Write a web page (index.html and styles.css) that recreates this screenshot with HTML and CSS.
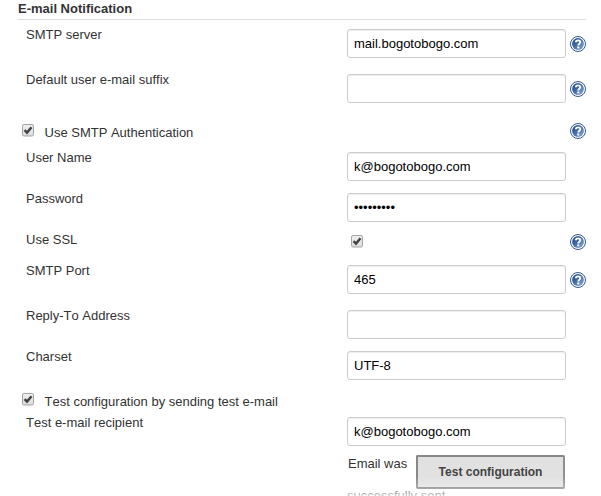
FILE: index.html
```html
<!DOCTYPE html>
<html lang="en">
<head>
<meta charset="utf-8">
<title>E-mail Notification</title>
<link rel="stylesheet" href="styles.css">
</head>
<body>
<svg class="defs" width="0" height="0">
  <defs>
    <linearGradient id="blue" x1="0" y1="0" x2="1" y2="1"><stop offset="0" stop-color="#1f4787"/><stop offset=".4" stop-color="#3a64a3"/><stop offset="1" stop-color="#8fb0d8"/></linearGradient>
    <linearGradient id="box" x1="0" y1="0" x2="0" y2="1"><stop offset="0" stop-color="#f0f0f0"/><stop offset="1" stop-color="#dcdcdc"/></linearGradient>
    <symbol id="help" viewBox="0 0 16 16">
      <circle cx="8" cy="8" r="7.5" fill="#fff" stroke="#34588f" stroke-width="1"/>
      <circle cx="8" cy="8" r="5.9" fill="url(#blue)"/>
      <path d="M5.9 6.2C5.9 3.7 10.3 3.8 10.3 6.1C10.3 7.7 8.3 7.7 8.3 9.5" fill="none" stroke="#fff" stroke-width="1.9"/>
      <rect x="7.2" y="10.5" width="2.1" height="1.9" fill="#fff"/>
    </symbol>
    <symbol id="check" viewBox="0 0 12 13">
      <rect x=".5" y=".5" width="11" height="11.5" rx="1.5" fill="url(#box)" stroke="#a5a5a5"/>
      <path d="M2.6 6.2L5 8.6L9.5 3.2" fill="none" stroke="#414141" stroke-width="2.4"/>
    </symbol>
  </defs>
</svg>
<form class="settings">
  <h1 class="heading">E-mail Notification</h1>
  <div class="row h45"><label>SMTP server</label><input type="text" value="mail.bogotobogo.com"><svg class="help"><use href="#help"/></svg></div>
  <div class="row h45"><label>Default user e-mail suffix</label><input type="text"><svg class="help"><use href="#help"/></svg></div>
  <div class="row h33 toggle"><label><svg class="check"><use href="#check"/></svg><span>Use SMTP Authentication</span></label><svg class="help"><use href="#help"/></svg></div>
  <div class="row h41"><label>User Name</label><input type="text" value="k@bogotobogo.com"></div>
  <div class="row h41"><label>Password</label><input type="password" value="secretkey"></div>
  <div class="row h31 ssl"><label>Use SSL</label><svg class="check"><use href="#check"/></svg><svg class="help"><use href="#help"/></svg></div>
  <div class="row h45"><label>SMTP Port</label><input type="text" value="465"><svg class="help"><use href="#help"/></svg></div>
  <div class="row h41"><label>Reply-To Address</label><input type="text"></div>
  <div class="row h41"><label>Charset</label><input type="text" value="UTF-8"></div>
  <div class="row h25 toggle"><label><svg class="check"><use href="#check"/></svg><span>Test configuration by sending test e-mail</span></label></div>
  <div class="row h38"><label>Test e-mail recipient</label><input type="text" value="k@bogotobogo.com"></div>
  <div class="result"><p>Email was successfully&nbsp;sent</p><button type="button">Test configuration</button></div>
</form>
</body>
</html>
```
FILE: styles.css
```css
* { box-sizing: border-box; }
body {
  margin: 0;
  height: 496px;
  overflow: hidden;
  background: #fff;
  color: #333;
  font: 13px/15px "Liberation Sans", Arial, sans-serif;
  font-kerning: none;
}
.defs { position: absolute; }
.settings { width: 568px; margin-left: 18px; }
.heading {
  height: 20px;
  margin: 0 0 7px;
  padding-top: 1px;
  border-bottom: 1px solid #ddd;
  font-size: 13px;
  line-height: 15px;
}
.row {
  display: grid;
  grid-template-columns: 329px 219px 16px;
  align-items: start;
}
.row > label { padding-left: 8px; }
.h45 { height: 45px; }
.h41 { height: 41px; }
.h38 { height: 38px; }
.h33 { height: 33px; }
.h31 { height: 31px; }
.h25 { height: 25px; }
input {
  width: 219px;
  height: 29px;
  margin: 2px 0 0;
  padding: 0 6px;
  border: 1px solid #ccc;
  border-radius: 3px;
  background: #fff;
  box-shadow: inset 0 1px 1px rgba(0, 0, 0, .075);
  color: #000;
  font: inherit;
  font-kerning: none;
}
.help { grid-column: 3; width: 16px; height: 16px; margin: 9px 0 0 4px; overflow: visible; }
.check { width: 12px; height: 13px; }
.row.toggle > label { grid-column: 1 / 3; display: flex; padding-left: 4px; }
.toggle .check { margin: 7px 10.5px 0 0; }
.toggle span { padding-top: 8px; }
.toggle .help { margin-top: 6px; }
.h25 .check { margin-top: 3px; }
.h25 span { padding-top: 4px; }
.ssl > .check { margin: 3px 0 0 4px; }
.ssl .help { margin-top: 2px; }
.result {
  display: flex;
  align-items: flex-start;
  width: 219px;
  height: 43px;
  margin-left: 329px;
}
.result p { width: 69px; margin: -5px 0 0; text-indent: 1px; line-height: 32px; }
.result button {
  width: 149px;
  height: 34px;
  margin-top: 2px;
  padding: 0;
  border: 2px solid #888;
  border-right-color: #8f8f8f;
  border-bottom-color: #7c7c7c;
  border-radius: 2px;
  background: #e1e1e1;
  color: #444;
  font: bold 12px/16px "Liberation Sans", Arial, sans-serif;
}
body::after {
  content: "";
  position: absolute;
  left: 0;
  right: 0;
  top: 476px;
  height: 20px;
  background: linear-gradient(rgba(255, 255, 255, 0), rgba(255, 255, 255, .3) 60%, rgba(255, 255, 255, .75));
}
```
